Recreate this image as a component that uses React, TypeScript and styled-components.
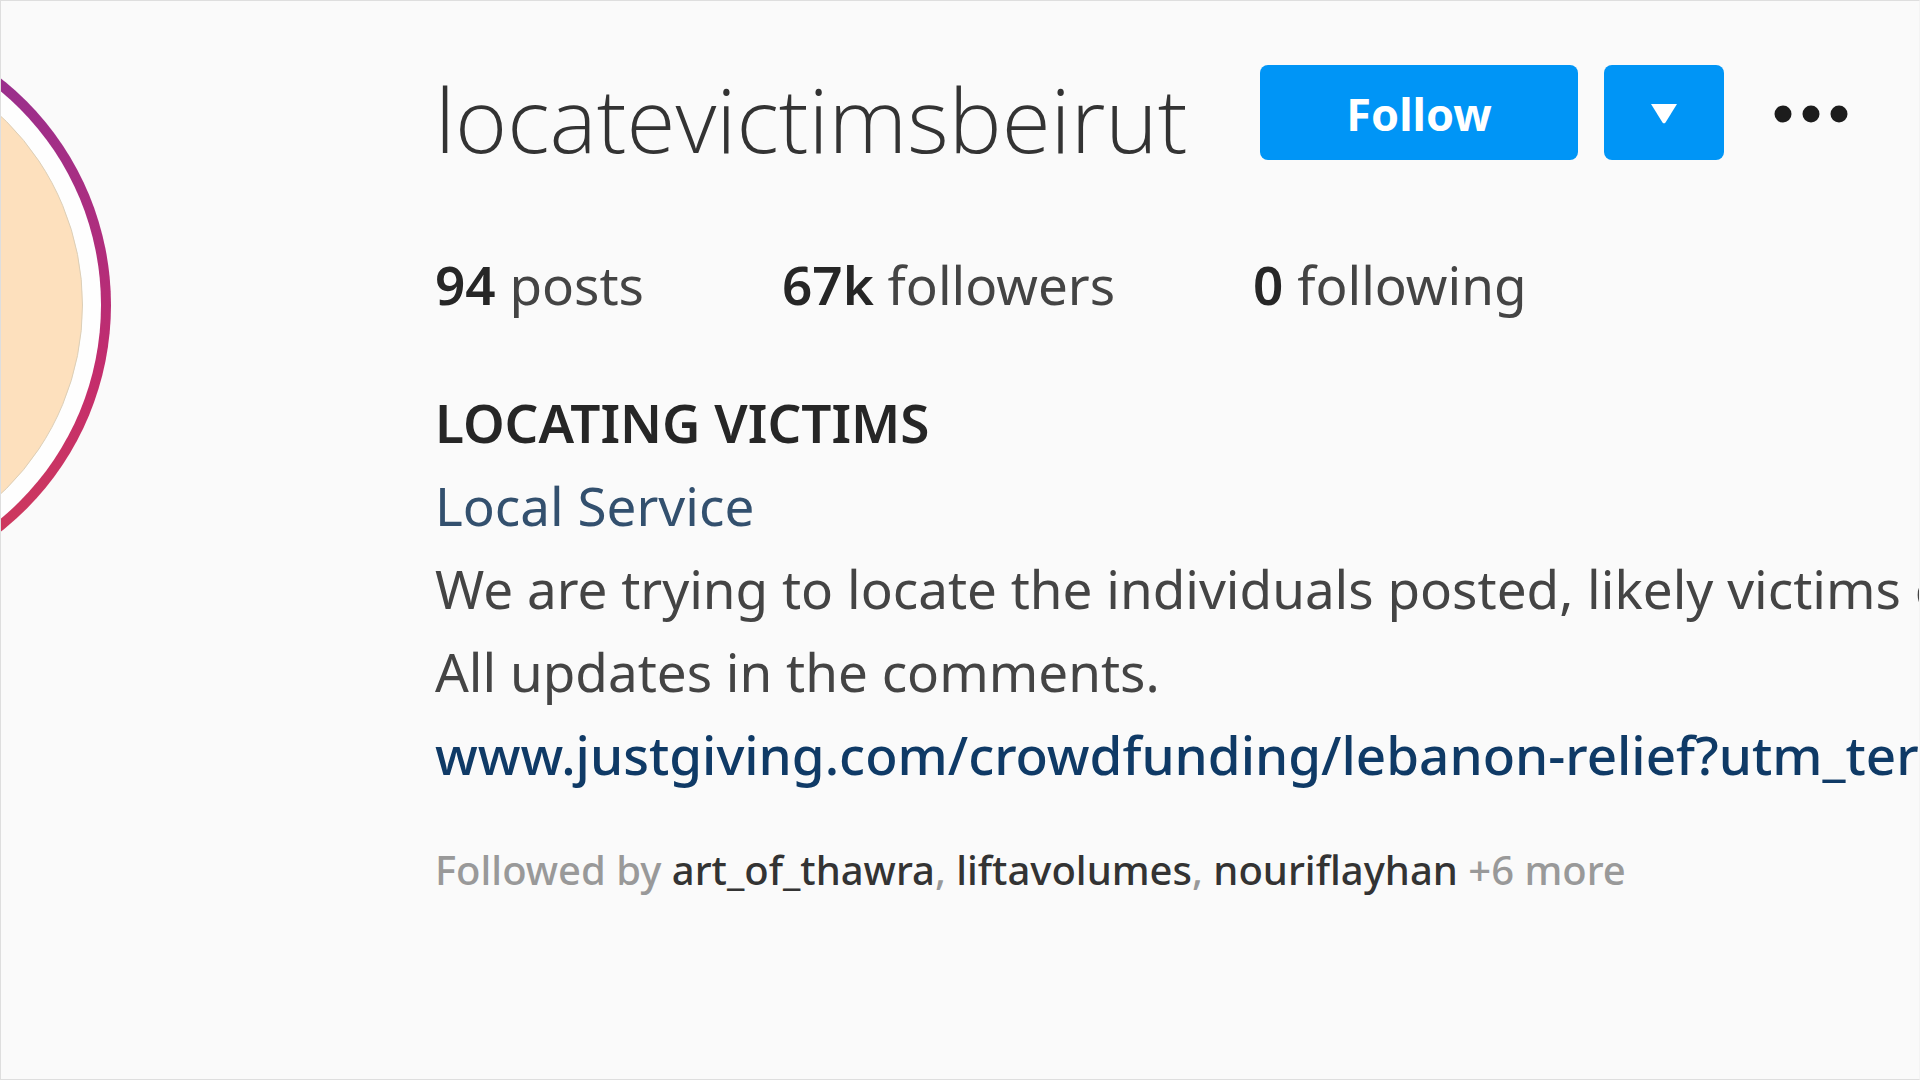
import React from "react";
import styled, { createGlobalStyle } from "styled-components";

const GlobalStyle = createGlobalStyle`
  *, *::before, *::after { box-sizing: border-box; }
  body {
    margin: 0;
    background: #fafafa;
    color: #262626;
    font-family: "Noto Sans", "Open Sans", sans-serif;
  }
  h1, h2, p, ul { margin: 0; padding: 0; font: inherit; }
  a { color: inherit; text-decoration: none; }
`;

const Page = styled.main`
  display: flex;
  align-items: flex-start;
  gap: 324px;
  min-height: 100vh;
  overflow: hidden;
  border: 1px solid #dedede;
  border-right-color: #f4f4f4;
`;

const StoryRing = styled.button`
  flex: none;
  width: 576px;
  height: 576px;
  margin: 16px 0 0 -466px;
  padding: 10px;
  border: 0;
  border-radius: 50%;
  background: linear-gradient(to bottom, #9b2f8c 12%, #b02d7c 40%, #c42d6c 62%, #ce3a5c 92%);
`;

const RingGap = styled.span`
  display: block;
  height: 100%;
  padding: 18px;
  border-radius: 50%;
  background: #fefefe;
`;

const Avatar = styled.span`
  display: block;
  height: 100%;
  border: 1px solid #dccfb8;
  border-radius: 50%;
  background: #fde0bd;
`;

const Profile = styled.section`
  flex: 1;
  min-width: 0;
  display: flex;
  flex-direction: column;
  padding-top: 64px;
`;

const TitleRow = styled.header`
  display: flex;
  align-items: flex-start;
  height: 94px;
`;

const Username = styled.h1`
  flex: none;
  width: 825px;
  font-family: "Open Sans", "Noto Sans", sans-serif;
  font-weight: 300;
  font-size: 89px;
  line-height: 108px;
  color: #333;
`;

const BlueButton = styled.button<{ $wide?: boolean }>`
  flex: none;
  display: flex;
  align-items: center;
  justify-content: center;
  width: ${(p) => (p.$wide ? 318 : 120)}px;
  height: 95px;
  margin-right: 26px;
  padding: 2px 0 0;
  border: 0;
  border-radius: 8px;
  background: #0095f6;
  color: #fff;
  font: 700 45px "Noto Sans", sans-serif;
`;

const MoreButton = styled.button`
  flex: none;
  display: flex;
  align-items: center;
  height: 95px;
  margin-left: 20px;
  padding: 2px 0 0 4px;
  border: 0;
  background: none;
  color: #262626;
`;

const Stats = styled.ul`
  display: flex;
  gap: 138px;
  margin-top: 84px;
  list-style: none;
  font-size: 53px;
  line-height: 83px;
  color: #444;
`;

const Stat = styled.li`
  white-space: nowrap;
  strong { font-weight: 600; color: #262626; }
`;

const Bio = styled.div`
  margin-top: 55px;
  font-size: 53px;
  line-height: 83px;
  color: #444;
  white-space: nowrap;
`;

const DisplayName = styled.h2`
  font-weight: 600;
  color: #262626;
`;

const Category = styled.a`
  display: block;
  color: #33506e;
`;

const Website = styled.a`
  display: block;
  font-weight: 500;
  color: #0f3a66;
`;

const FollowedBy = styled.p`
  margin-top: 44px;
  font-weight: 500;
  font-size: 40px;
  line-height: 60px;
  color: #999;
  white-space: nowrap;
  a { color: #333; }
`;

const stats = [
  { value: "94", label: "posts" },
  { value: "67k", label: "followers" },
  { value: "0", label: "following" },
];

const followers = ["art_of_thawra", "liftavolumes", "nouriflayhan"];

export default function App() {
  return (
    <>
      <GlobalStyle />
      <Page>
        <StoryRing aria-label="View story">
          <RingGap>
            <Avatar />
          </RingGap>
        </StoryRing>
        <Profile>
          <TitleRow>
            <Username>locatevictimsbeirut</Username>
            <BlueButton $wide>Follow</BlueButton>
            <BlueButton aria-label="Similar accounts">
              <svg width="26" height="20" viewBox="0 0 26 20" aria-hidden="true">
                <path d="M0 0h26L14.500 18.500a2 2 0 0 1-3 0z" fill="#fff" />
              </svg>
            </BlueButton>
            <MoreButton aria-label="Options">
              <svg width="74" height="18" viewBox="0 0 74 18" fill="#1c1c1c" aria-hidden="true">
                <circle cx="9" cy="9" r="8.500" />
                <circle cx="37" cy="9" r="8.500" />
                <circle cx="65" cy="9" r="8.500" />
              </svg>
            </MoreButton>
          </TitleRow>
          <Stats>
            {stats.map((s) => (
              <Stat key={s.label}>
                <strong>{s.value}</strong> {s.label}
              </Stat>
            ))}
          </Stats>
          <Bio>
            <DisplayName>LOCATING VICTIMS</DisplayName>
            <Category href="#category">Local Service</Category>
            <p>We are trying to locate the individuals posted, likely victims of</p>
            <p>All updates in the comments.</p>
            <Website href="#website">www.justgiving.com/crowdfunding/lebanon-relief?utm_term</Website>
          </Bio>
          <FollowedBy>
            Followed by{" "}
            {followers.map((name, i) => (
              <React.Fragment key={name}>
                {i > 0 && ", "}
                <a href={`#${name}`}>{name}</a>
              </React.Fragment>
            ))}{" "}
            +6 more
          </FollowedBy>
        </Profile>
      </Page>
    </>
  );
}
